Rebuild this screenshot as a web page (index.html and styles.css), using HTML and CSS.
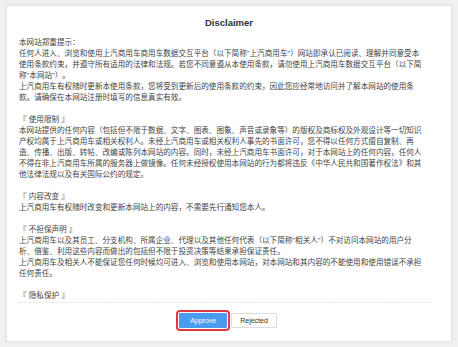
FILE: index.html
```html
<!DOCTYPE html>
<html lang="zh-CN">

<head>
  <meta charset="UTF-8" />
  <meta name="viewport" content="width=device-width, initial-scale=1.0" />
  <title>Disclaimer</title>
  <link rel="stylesheet" href="styles.css">
</head>

<body>
  <main class="page">
    <section class="dialog">
      <h1 class="dialog-title">Disclaimer</h1>
      <div class="dialog-body">
        <div class="section keep-lines">
          <p>本网站郑重提示：</p>
          <p>任何人进入、浏览和使用上汽商用车商用车数据交互平台（以下简称"上汽商用车"）网站即承认已阅读、理解并同意受本<br>使用条款约束，并遵守所有适用的法律和法规。若您不同意遵从本使用条款，请勿使用上汽商用车数据交互平台（以下简<br>称"本网站"）。</p>
          <p>上汽商用车有权随时更新本使用条款，您将受到更新后的使用条款的约束，因此您应经常地访问并了解本网站的使用条<br>款。请确保在本网站注册时填写的信息真实有效。</p>
        </div>
        <div class="section keep-lines">
          <p>『 使用限制 』</p>
          <p>本网站提供的任何内容（包括但不限于数据、文字、图表、图象、声音或录象等）的版权及商标权及外观设计等一切知识<br>产权均属于上汽商用车或相关权利人。未经上汽商用车或相关权利人事先的书面许可，您不得以任何方式擅自复制、再<br>造、传播、出版、转帖、改编或陈列本网站的内容。同时，未经上汽商用车书面许可，对于本网站上的任何内容，任何人<br>不得在非上汽商用车所属的服务器上做镜像。任何未经授权使用本网站的行为都将违反《中华人民共和国著作权法》和其<br>他法律法规以及有关国际公约的规定。</p>
        </div>
        <div class="section keep-lines">
          <p>『 内容改变 』</p>
          <p>上汽商用车有权随时改变和更新本网站上的内容，不需要先行通知您本人。</p>
        </div>
        <div class="section keep-lines">
          <p>『 不担保声明 』</p>
          <p>上汽商用车以及其员工、分支机构、所属企业、代理以及其他任何代表（以下简称"相关人"）不对访问本网站的用户分<br>析、借鉴、利用这些内容而做出的包括但不限于投资决策等结果承担保证责任。</p>
          <p>上汽商用车及相关人不能保证您任何时候均可进入、浏览和使用本网站，对本网站和其内容的不能使用和使用错误不承担<br>任何责任。</p>
        </div>
        <div class="section">
          <p>『 隐私保护 』</p>
          <p>上汽商用车尊重并保护所有使用本网站用户的个人隐私权。为了给您提供更准确、更有个性化的服务，本网站会按照本隐私权政策的规定使用和披露您的个人信息。但本网站将以高度的勤勉、审慎义务对待这些信息。除本隐私权政策另有规定外，在未征得您事先许可的情况下，本网站不会将这些信息对外披露或向第三方提供。本网站会不时更新本隐私权政策。您在同意本网站服务使用协议之时，即视为您已经同意本隐私权政策全部内容。</p>
        </div>
        <div class="section">
          <p>『 信息使用 』</p>
          <p>本网站不会向任何无关第三方提供、出售、出租、分享或交易您的个人信息，除非事先得到您的许可，或该第三方和本网站单独或共同为您提供服务，且在该服务结束后，其将被禁止访问包括其以前能够访问的所有这些资料。</p>
          <p>本网站亦不允许任何第三方以任何手段收集、编辑、出售或者无偿传播您的个人信息。任何本网站用户如从事上述活动，一经发现，本网站有权立即终止与该用户的服务协议。</p>
        </div>
        <div class="section">
          <p>『 信息披露 』</p>
          <p>在如下情况下，本网站将依据您的个人意愿或法律的规定全部或部分的披露您的个人信息：经您事先同意，向第三方披露；为提供您所要求的产品和服务，而必须和第三方分享您的个人信息；根据法律的有关规定，或者行政或司法机构的要求，向第三方或者行政、司法机构披露。</p>
        </div>
        <div class="section">
          <p>『 信息安全 』</p>
          <p>本网站账号均有安全保护功能，请妥善保管您的用户名及密码信息。本网站将通过对用户密码进行加密等安全措施确保您的信息不丢失，不被滥用和变造。尽管有前述安全措施，但同时也请您注意在信息网络上不存在"完善的安全措施"。</p>
        </div>
        <div class="section">
          <p>『 法律适用 』</p>
          <p>本使用条款的订立、执行和解释及争议的解决均应适用中华人民共和国法律。如发生本使用条款与中华人民共和国法律相抵触时，则这些条款将完全按法律规定重新解释，而其它条款依旧具有法律效力。</p>
        </div>
        <div class="section">
          <p>『 其他 』</p>
          <p>本使用条款的最终解释权归上汽商用车所有。如您对本使用条款有任何疑问，请通过本网站公布的联系方式与我们联系，我们将尽快给予答复。</p>
        </div>
      </div>
      <div class="dialog-actions">
        <button class="btn btn-primary">Approve</button>
        <button class="btn">Rejected</button>
      </div>
    </section>
  </main>
</body>

</html>
```

FILE: styles.css
```css
body {
  margin: 0;
  background-color: #f0f0f0;
  font-family: "Liberation Sans", "Noto Sans CJK SC", sans-serif;
  color: #444;
}

.page {
  padding: 5px 6px;
}

.dialog {
  height: 335px;
  padding: 0 10px;
  background-color: #fff;
  border: 1px solid #e4e4e4;
  box-shadow: 0 0 3px rgba(0, 0, 0, 0.05);
}

.dialog-title {
  margin: 0;
  padding-top: 3px;
  line-height: 28px;
  font-size: 9.5px;
  font-weight: bold;
  text-align: center;
  color: #333;
}

.dialog-body {
  width: 414px;
  height: 265px;
  padding-left: 2px;
  overflow-x: hidden;
  overflow-y: scroll;
  border-bottom: 1px solid #eee;
  font-size: 7.6px;
  line-height: 11px;
  font-kerning: none;
  text-spacing-trim: space-all;
}

.dialog-body::-webkit-scrollbar {
  width: 8px;
}

.dialog-body::-webkit-scrollbar-track {
  background-color: #f1f1f1;
}

.dialog-body::-webkit-scrollbar-thumb {
  background-color: #c2c2c2;
}

.dialog-body::-webkit-scrollbar-button:single-button {
  display: block;
  height: 12px;
  background-color: #f1f1f1;
  background-repeat: no-repeat;
  background-position: center;
}

.dialog-body::-webkit-scrollbar-button:single-button:vertical:decrement {
  background-image: url("data:image/svg+xml;utf8,<svg xmlns='http://www.w3.org/2000/svg' width='6' height='4'><path d='M0.8 3.4L3 1.2L5.2 3.4' fill='none' stroke='%23505050' stroke-width='1.1'/></svg>");
}

.dialog-body::-webkit-scrollbar-button:single-button:vertical:increment {
  background-image: url("data:image/svg+xml;utf8,<svg xmlns='http://www.w3.org/2000/svg' width='6' height='4'><path d='M0.8 0.6L3 2.8L5.2 0.6' fill='none' stroke='%23505050' stroke-width='1.1'/></svg>");
}

.section {
  margin-bottom: 11px;
}

.section p {
  margin: 0;
}

.keep-lines p {
  white-space: nowrap;
}

.dialog-actions {
  display: flex;
  justify-content: center;
  gap: 4px;
  padding: 10px 0 0 3px;
  width: 416px;
}

.btn {
  height: 15px;
  padding: 0 8px;
  border: 1px solid #ddd;
  border-radius: 1px;
  background-color: #fff;
  font-family: "Liberation Sans", sans-serif;
  font-size: 7px;
  line-height: 13px;
  color: #333;
  cursor: pointer;
}

.btn-primary {
  padding: 0 10px;
  border-color: #4a9cf0;
  background-color: #4a9cf0;
  color: #fff;
  outline: 2px solid #e0393e;
  outline-offset: 1px;
}
```
